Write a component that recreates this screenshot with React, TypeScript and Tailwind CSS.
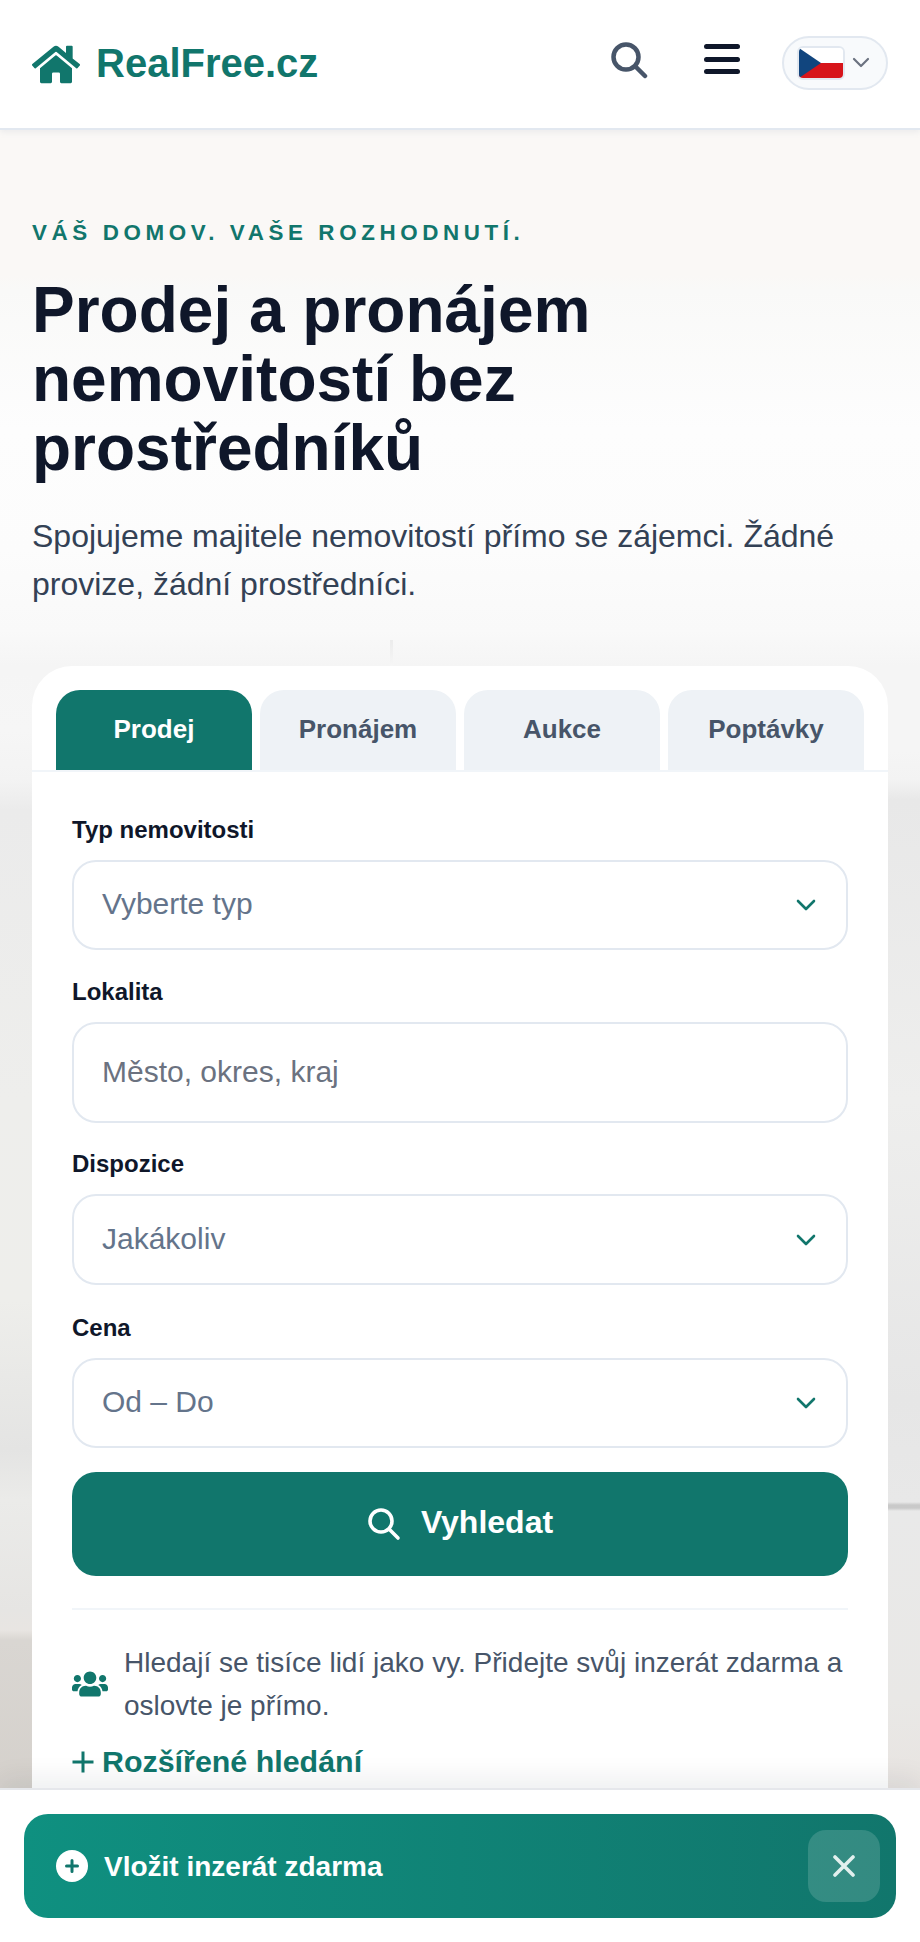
import React from "react";

const teal = "#11766c";

function Chevron() {
  return (
    <svg width="20" height="12" viewBox="0 0 20 12" fill="none" stroke="#11766c" strokeWidth="2.6" strokeLinecap="round" strokeLinejoin="round">
      <path d="M2 2 L10 10 L18 2" />
    </svg>
  );
}

function Field({ label, value, h, gap, text = "text-[#64748b]", arrow = true }: { label: string; value: string; h: string; gap: string; text?: string; arrow?: boolean }) {
  return (
    <div className={gap}>
      <div className="text-[24px] leading-[28px] font-bold text-[#0f172a] mb-[16px]">{label}</div>
      <div className={`${h} rounded-[24px] border-2 border-[#e2e8f0] bg-white flex items-center justify-between pl-[28px] pr-[30px]`}>
        <span className={`text-[30px] leading-[36px] mt-[-2px] ${text}`}>{value}</span>
        {arrow && <Chevron />}
      </div>
    </div>
  );
}

export default function App() {
  return (
    <div className="relative w-[920px] h-[1942px] overflow-hidden bg-white font-['Liberation_Sans',Arial,sans-serif]">
      <header className="h-[130px] bg-white border-b-2 border-[#e2e8f0] shadow-[0_2px_6px_rgba(148,163,184,0.15)] flex items-center pl-[32px] relative z-10">
        <svg width="48" height="43" viewBox="0 0 576 512" className="mr-[16px]" fill={teal}>
          <path d="M280.37 148.26L96 300.11V464a16 16 0 0 0 16 16l112.06-.29a16 16 0 0 0 15.92-16V368a16 16 0 0 1 16-16h64a16 16 0 0 1 16 16v95.64a16 16 0 0 0 16 16.05L464 480a16 16 0 0 0 16-16V300L295.67 148.26a12.19 12.19 0 0 0-15.3 0zM571.6 251.47L488 182.56V44.05a12 12 0 0 0-12-12h-56a12 12 0 0 0-12 12v72.61L318.47 43a48 48 0 0 0-61 0L4.34 251.47a12 12 0 0 0-1.6 16.9l25.5 31A12 12 0 0 0 45.15 301l235.22-193.74a12.19 12.19 0 0 1 15.3 0L530.9 301a12 12 0 0 0 16.9-1.6l25.5-31a12 12 0 0 0-1.7-16.93z" />
        </svg>
        <span className="text-[40px] leading-[46px] font-bold text-[#11766c] mt-[-2px]">RealFree.cz</span>
        <div className="ml-auto flex items-center mt-[-4px]">
          <svg width="38" height="38" viewBox="0 0 38 38" fill="none" stroke="#475569" strokeWidth="4.5" strokeLinecap="round" className="mr-[56px] mt-[-4px]">
            <circle cx="16" cy="16" r="12.5" />
            <path d="M25.5 25.5 L35 35" />
          </svg>
          <svg width="36" height="32" viewBox="0 0 36 32" fill="#0f172a" className="mr-[42px] mt-[-6px]">
            <rect x="0" y="1" width="36" height="5" rx="2.5" />
            <rect x="0" y="14" width="36" height="5" rx="2.5" />
            <rect x="0" y="26" width="36" height="5" rx="2.5" />
          </svg>
          <div className="w-[106px] h-[54px] mt-[2px] rounded-full border-2 border-[#e2e8f0] bg-[#f8fafc] flex items-center pl-[13px] mr-[32px]">
            <div className="w-[48px] h-[34px] rounded-[6px] border-2 border-[#e2e8f0] overflow-hidden shrink-0">
              <svg width="44" height="30" viewBox="0 0 44 30" className="block">
                <rect width="44" height="15" fill="#ffffff" />
                <rect y="15" width="44" height="15" fill="#d7141a" />
                <path d="M0 0 L22 15 L0 30 Z" fill="#11457e" />
              </svg>
            </div>
            <svg width="20" height="12" viewBox="0 0 20 12" fill="none" stroke="#6b7280" strokeWidth="2.2" strokeLinecap="round" strokeLinejoin="round" className="ml-[6px]">
              <path d="M3 2 L10 9 L17 2" />
            </svg>
          </div>
        </div>
      </header>

      <main className="relative h-[1812px] pl-[32px] pr-[32px] pt-[90px] [background:linear-gradient(#ececec,#f6f6f6)_390px_510px/3px_26px_no-repeat,linear-gradient(180deg,transparent_0px,transparent_540px,#f6f6f6_600px,#f3f3f3_650px,#ebebeb_680px,#eeeeec_970px,#eeeeeb_1170px,#e4e4e3_1320px,#ebebe9_1370px,#e6e5e3_1480px,#e8e5e2_1500px,#d9d6d2_1510px,#d5d1cc_1658px)_left_top/32px_100%_no-repeat,linear-gradient(180deg,transparent_0px,transparent_540px,#f5f5f5_620px,#f3f3f3_650px,#e8e8e8_670px,#eeeeed_970px,#e6e6e6_1270px,#e8e8e8_1372px,#c9c9c9_1375px,#c9c9c9_1378px,#e9e9e9_1381px,#e9e8e6_1570px,#e8e4e1_1658px)_right_top/32px_100%_no-repeat,linear-gradient(180deg,#faf8f6_0px,#faf8f6_145px,#f9f9f8_160px,#fdfdfd_300px,#fcfcfc_420px,#f9f9f9_500px,#f5f5f5_536px,#f5f5f5_100%)]">
        <div className="text-[22.4px] leading-[26px] font-bold tracking-[4.6px] text-[#11766c]">VÁŠ DOMOV. VAŠE ROZHODNUTÍ.</div>
        <h1 className="mt-[30px] text-[64px] leading-[69px] font-bold text-[#0f172a] w-[640px]">Prodej a pronájem nemovitostí bez prostředníků</h1>
        <p className="mt-[29px] text-[32px] leading-[48px] text-[#334155] w-[856px]">Spojujeme majitele nemovitostí přímo se zájemci. Žádné provize, žádní prostředníci.</p>

        <section className="mt-[58px] h-[1200px] rounded-t-[40px] bg-white">
          <div className="h-[106px] pt-[24px] px-[24px] flex gap-[8px] border-b-2 border-[#f1f5f9]">
            {["Prodej", "Pronájem", "Aukce", "Poptávky"].map((t, i) => (
              <div key={t} className={`flex-1 h-[80px] rounded-t-[24px] flex items-center justify-center pb-[2px] text-[26px] font-bold ${i === 0 ? "bg-[#11766c] text-white" : "bg-[#eef2f6] text-[#475569]"}`}>{t}</div>
            ))}
          </div>
          <div className="px-[40px] pt-[44px]">
            <Field label="Typ nemovitosti" value="Vyberte typ" h="h-[90px]" gap="" />
            <Field label="Lokalita" value="Město, okres, kraj" h="h-[101px]" gap="mt-[28px]" text="text-[#6b7280]" arrow={false} />
            <Field label="Dispozice" value="Jakákoliv" h="h-[91px]" gap="mt-[27px]" />
            <Field label="Cena" value="Od – Do" h="h-[90px]" gap="mt-[29px]" />
            <button className="mt-[24px] w-full h-[104px] rounded-[24px] bg-[#11766c] text-white flex items-center justify-center gap-[20px] text-[32px] font-bold">
              <svg width="34" height="34" viewBox="0 0 34 34" fill="none" stroke="white" strokeWidth="3.6" strokeLinecap="round">
                <circle cx="14" cy="14" r="11" />
                <path d="M22.5 22.5 L31 31" />
              </svg>
              <span className="mt-[-5px]">Vyhledat</span>
            </button>
            <div className="mt-[32px] border-t-2 border-[#f1f5f9] pt-[31px] flex items-center gap-[16px]">
              <svg width="36" height="30" viewBox="0 0 640 512" fill={teal} className="shrink-0">
                <path d="M96 224c35.3 0 64-28.7 64-64s-28.7-64-64-64-64 28.700-64 64 28.700 64 64 64zm448 0c35.300 0 64-28.700 64-64s-28.700-64-64-64-64 28.700-64 64 28.700 64 64 64zm32 32h-64c-17.600 0-33.500 7.100-45.100 18.600 40.300 22.100 68.900 62 75.100 109.400h66c17.700 0 32-14.300 32-32v-32c0-35.300-28.700-64-64-64zm-256 0c61.900 0 112-50.100 112-112S381.900 32 320 32 208 82.100 208 144s50.100 112 112 112zm76.800 32h-8.300c-20.800 10-43.900 16-68.500 16s-47.600-6-68.500-16h-8.300C179.600 288 128 339.600 128 403.200V432c0 26.500 21.500 48 48 48h288c26.500 0 48-21.500 48-48v-28.800c0-63.600-51.600-115.200-115.200-115.200zm-223.700-13.400C161.500 263.100 145.600 256 128 256H64c-35.300 0-64 28.700-64 64v32c0 17.700 14.300 32 32 32h65.900c6.300-47.400 34.900-87.300 75.200-109.400z" />
              </svg>
              <p className="text-[28px] leading-[43px] text-[#475569]">Hledají se tisíce lidí jako vy. Přidejte svůj inzerát zdarma a oslovte je přímo.</p>
            </div>
            <div className="mt-[15px] flex items-center gap-[8px] text-[30.4px] leading-[38px] font-bold text-[#11766c]">
              <svg width="22" height="22" viewBox="0 0 22 22" stroke={teal} strokeWidth="3" strokeLinecap="square" className="mt-[2px]">
                <path d="M11 2 V20 M2 11 H20" />
              </svg>
              Rozšířené hledání
            </div>
          </div>
        </section>
      </main>

      <div className="absolute bottom-0 left-0 right-0 h-[154px] bg-white border-t-2 border-[#e5e7eb] px-[24px] pt-[24px] shadow-[0_-10px_24px_rgba(15,23,42,0.07)]">
        <div className="h-[104px] rounded-[24px] bg-[linear-gradient(90deg,#0f9080,#11766c)] flex items-center pl-[32px] pr-[16px]">
          <svg width="32" height="32" viewBox="0 0 32 32" className="mr-[16px]">
            <circle cx="16" cy="16" r="16" fill="white" />
            <path d="M16 10.500 V21.500 M10.500 16 H21.500" stroke="#11766c" strokeWidth="3" strokeLinecap="round" />
          </svg>
          <span className="text-[28px] font-bold text-white mt-[1px]">Vložit inzerát zdarma</span>
          <div className="ml-auto w-[72px] h-[72px] rounded-[18px] bg-[rgba(255,255,255,0.15)] flex items-center justify-center">
            <svg width="22" height="22" viewBox="0 0 22 22" stroke="#e2f0ee" strokeWidth="3.6" strokeLinecap="round">
              <path d="M2 2 L20 20 M20 2 L2 20" />
            </svg>
          </div>
        </div>
      </div>
    </div>
  );
}
